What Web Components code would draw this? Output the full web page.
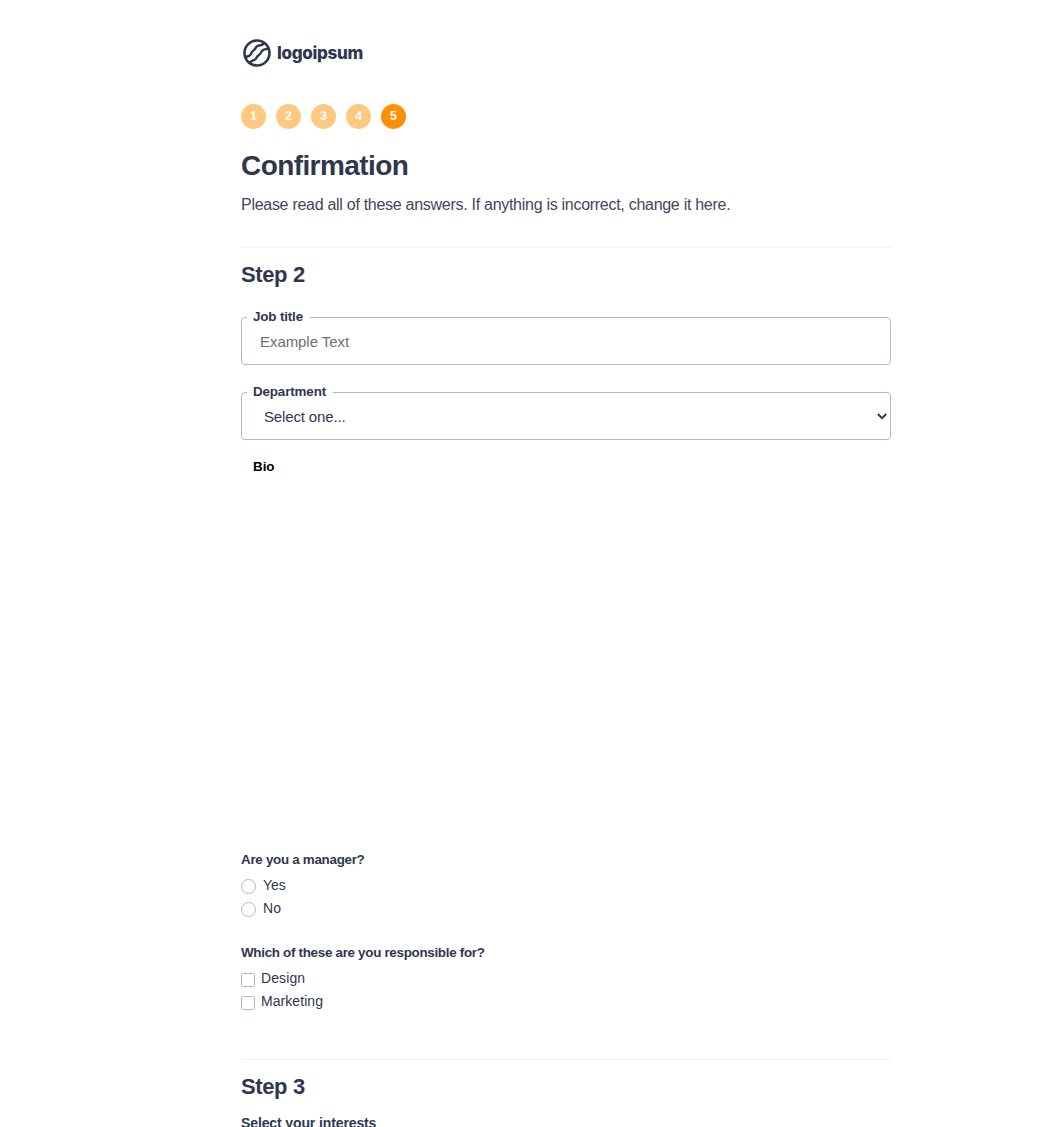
<!DOCTYPE html>
<html lang="en">
<head>
<meta charset="utf-8">
<title>Confirmation</title>
<style>
html,body{margin:0;background:#fff;overflow:hidden}
body{height:1127px;font-family:"Liberation Sans",Arial,sans-serif;color:#2f374e}
</style>
</head>
<body>
<confirmation-page></confirmation-page>
<script>
const define=(name,html,setup)=>customElements.define(name,class extends HTMLElement{
  connectedCallback(){
    if(this.shadowRoot)return;
    const root=this.attachShadow({mode:'open'});
    root.innerHTML=html;
    if(setup)setup(this,root);
  }
});

// One line of text whose tracking is adjusted to a given advance width.
define('fit-text',`<style>:host{display:inline-block;white-space:nowrap}span{display:inline-block}</style><span><slot></slot></span>`,(el,root)=>{
  const span=root.querySelector('span'),w=+el.getAttribute('w'),n=el.textContent.length;
  if(w)span.style.letterSpacing=((w-span.getBoundingClientRect().width)/n)+'px';
});

define('brand-logo',`<style>
:host{display:flex;align-items:center;height:30px;padding-left:1px;gap:5px;font:800 17px/30px Inter,"Liberation Sans",sans-serif;color:#2f374e}
svg{display:block;width:30px;height:30px}
</style>
<svg viewBox="0 0 30 30" fill="none" stroke="#2f374e" stroke-width="2.6"><circle cx="15" cy="15" r="12.5"/>
<path stroke-width="2.4" d="M3.6 19C7 18.4 8.6 17.6 9.2 15.4C9.8 12.9 12.2 12.7 13.2 10.6C14.3 8 16 7.6 18.2 7.3C20.4 7 21.6 6.2 22.6 4.8"/>
<path stroke-width="2.4" d="M7.6 25.2C8.6 23.2 9.6 22.6 11.6 22.2C14.4 21.6 14.2 19.6 15.6 18.1C17.2 16.5 18.6 16.1 19.4 13.9C20.2 11.6 22.4 11.2 26.6 10.8"/></svg>
<fit-text w="86">logoipsum</fit-text>`);

define('step-dot',`<style>
:host{display:flex;align-items:center;justify-content:center;width:25px;height:25px;border-radius:50%;background:#ffc880;color:#fff;font:bold 12.5px/25px "Liberation Sans",sans-serif}
:host([active]){background:#ff9100}
</style><slot></slot>`);

define('form-field',`<style>
:host{display:block;position:relative;box-sizing:border-box;height:48px;border:1px solid #b0b6d4;border-radius:4px;padding-left:18px;font-size:15px;line-height:48px;color:#6f6f6f}
:host([select]){padding-left:22px;color:#2f374e}
.label{position:absolute;left:5px;top:-10px;height:18px;padding:0 7px 0 6px;background:#fff;color:#2f374e;font:bold 13.4px/18px "Liberation Sans",sans-serif}
.label ::slotted(*){vertical-align:top}
svg{display:none;position:absolute;right:3px;top:20px}
:host([select]) svg{display:block}
</style><div class="label"><slot name="label"></slot></div><slot></slot>
<svg width="10" height="7" viewBox="0 0 10 7" fill="none" stroke="#2f374e" stroke-width="2"><path d="M.8 1L5 5.1L9.2 1"/></svg>`);

define('choice-item',`<style>
:host{display:flex;height:23px;font-size:14px;line-height:20px;gap:7px}
i{box-sizing:border-box;width:15px;height:15px;margin-top:4px;border:1px solid #b0b6d4;border-radius:50%}
:host([box]){gap:6px}
:host([box]) i{width:14px;height:14px;margin-top:5px;border-radius:1.5px}
</style><i></i><slot></slot>`);

define('form-section',`<style>
:host{display:block;border-top:1px solid #f0f0f8}
h2{margin:14px 0 0;font:bold 22px/26px "Liberation Sans",sans-serif}
</style><h2><slot name="title"></slot></h2><slot></slot>`);

define('confirmation-page',`<style>
:host{display:block;box-sizing:border-box;width:1045px;height:1127px;padding:38px 154px 0 241px;overflow:hidden}
nav{display:flex;gap:10px;margin-top:36px}
h1{margin:20px 0 0;font:bold 28px/34px "Liberation Sans",sans-serif}
p{margin:11px 0 0;font-size:16px;line-height:22px;color:#42475c}
form-section{margin-top:31px}
.fields{display:flex;flex-direction:column;gap:27px;margin-top:29px}
.q{font:bold 13.4px/18px "Liberation Sans",sans-serif}
.bio{margin:18px 0 0 12px;height:393px;color:#000}
.choices{margin-top:6px}
.q.next{margin-top:23px}
.last{margin-top:45px}
.interests{margin-top:14px;font-size:14px}
</style>
<brand-logo></brand-logo>
<nav><step-dot>1</step-dot><step-dot>2</step-dot><step-dot>3</step-dot><step-dot>4</step-dot><step-dot active>5</step-dot></nav>
<h1><fit-text w="167.2">Confirmation</fit-text></h1>
<p><fit-text w="489.3">Please read all of these answers. If anything is incorrect, change it here.</fit-text></p>
<form-section><fit-text slot="title" w="63.8">Step 2</fit-text>
<div class="fields">
<form-field><fit-text slot="label" w="50">Job title</fit-text><fit-text w="89">Example Text</fit-text></form-field>
<form-field select><fit-text slot="label" w="73">Department</fit-text><fit-text w="81.5">Select one...</fit-text></form-field>
</div>
<div class="q bio"><fit-text w="21.5">Bio</fit-text></div>
<div class="q"><fit-text w="123.5">Are you a manager?</fit-text></div>
<div class="choices"><choice-item><fit-text w="22.7">Yes</fit-text></choice-item><choice-item><fit-text w="18.2">No</fit-text></choice-item></div>
<div class="q next"><fit-text w="243.6">Which of these are you responsible for?</fit-text></div>
<div class="choices"><choice-item box><fit-text w="44.2">Design</fit-text></choice-item><choice-item box><fit-text w="62">Marketing</fit-text></choice-item></div>
</form-section>
<form-section class="last"><fit-text slot="title" w="63.8">Step 3</fit-text>
<div class="q interests"><fit-text w="135.3">Select your interests</fit-text></div>
</form-section>`);
</script>
</body>
</html>
